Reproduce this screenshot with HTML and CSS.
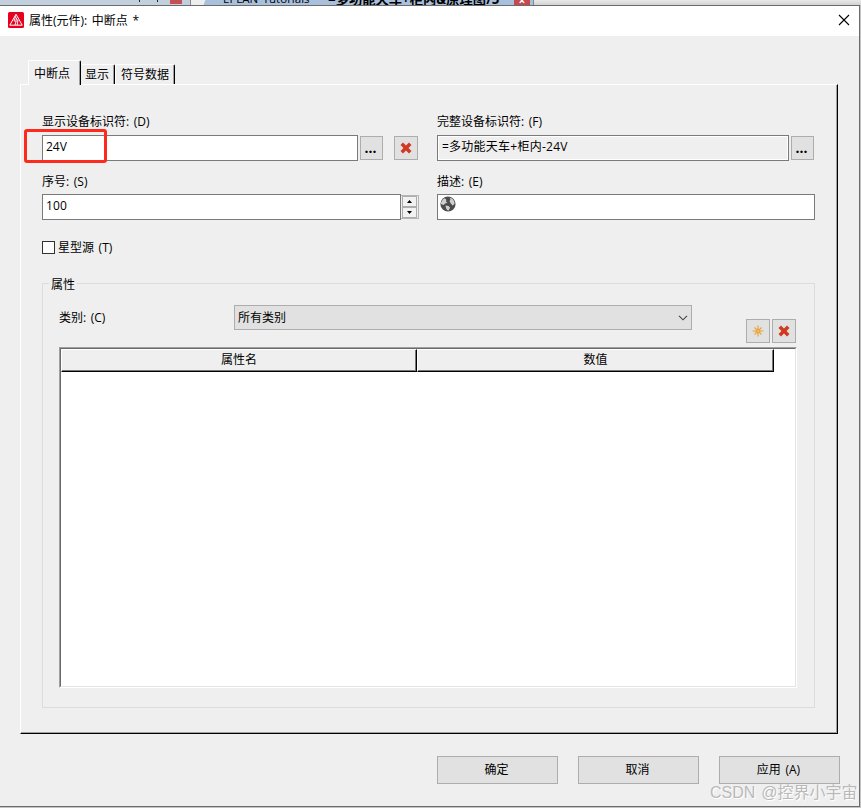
FILE: index.html
```
<!DOCTYPE html>
<html lang="zh-CN">
<head>
<meta charset="utf-8">
<title>属性(元件): 中断点</title>
<link rel="stylesheet" href="styles.css">
</head>
<body>
<div class="desktop">
  <div class="backdrop">
    <div class="back-left"><i class="tick"></i><i class="tick"></i><i class="mini-red"></i></div>
    <div class="back-tabs"><span class="back-tab">EPLAN Tutorials</span><span class="back-tab current">=多功能天车+柜内&amp;原理图/5</span><span class="back-close">×</span></div>
  </div>
  <main class="dialog">
    <header class="titlebar">
      <svg class="logo" width="16" height="16" viewBox="0 0 16 16"><rect width="16" height="16" rx="1.5" fill="#e5001f"/><path d="M8 2.2 14.2 13.2H1.8Z" fill="none" stroke="#fff" stroke-width="1"/><path d="M8 3.5 6 9h2.2L7 13M8.8 5.5 8 8h2l-.8 5" fill="none" stroke="#fff" stroke-width=".9"/></svg>
      <h1 class="title">属性(元件): 中断点 *</h1>
      <svg class="close" width="12" height="12" viewBox="0 0 12 12"><path d="M1 1 11 11M11 1 1 11" stroke="#000" stroke-width="1.1"/></svg>
    </header>
    <nav class="tabs"><span class="tab active">中断点</span><span class="tab second">显示</span><span class="tab third">符号数据</span></nav>
    <section class="panel">
      <div class="form">
        <div class="field">
          <label class="label">显示设备标识符: (D)</label>
          <div class="row"><div class="input device">24V<span class="highlight"></span></div><button class="btn dots">...</button><button class="btn icon del"><svg width="12" height="12" viewBox="0 0 12 12"><path d="M3 .5 6 3.5 9 .5 11.5 3 8.5 6 11.5 9 9 11.5 6 8.5 3 11.5 .5 9 3.5 6 .5 3Z" fill="#cf3a20"/></svg></button></div>
        </div>
        <div class="field">
          <label class="label">完整设备标识符: (F)</label>
          <div class="row"><div class="input full">=多功能天车+柜内-24V</div><button class="btn dots">...</button></div>
        </div>
        <div class="field">
          <label class="label">序号: (S)</label>
          <div class="row"><div class="input serial">100</div><div class="spinner"><span class="spin"><svg width="5" height="3" viewBox="0 0 5 3"><path d="M0 3 2.5 0 5 3Z"/></svg></span><span class="spin"><svg width="5" height="3" viewBox="0 0 5 3"><path d="M0 0H5L2.5 3Z"/></svg></span></div></div>
        </div>
        <div class="field">
          <label class="label">描述: (E)</label>
          <div class="row"><div class="input desc"><svg width="16" height="16" viewBox="0 0 16 16"><circle cx="8" cy="8" r="7.6" fill="#4b4b4b"/><path d="M1 6.5 3 3.3 5 2.2 6.5 4 5.8 5.5 7.5 6.8 5.2 7.5 3.5 9 1 8ZM9.5 1.5 12.5 2.8 14.3 5.5 14.6 8 12.5 9.5 10.5 7 9.5 5 10.5 3.5ZM5.5 9.5 8.5 10 10 11.5 8.8 14.5 7 14 6 12Z" fill="#cfcfcf"/></svg></div></div>
        </div>
      </div>
      <label class="check"><span class="box"></span>星型源 (T)</label>
      <div class="group">
        <h2 class="legend">属性</h2>
        <div class="filter">
          <span class="cat">类别: (C)</span>
          <div class="combo">所有类别<svg width="10" height="6" viewBox="0 0 10 6"><path d="M1 .8 5 4.8 9 .8" fill="none" stroke="#444" stroke-width="1.1"/></svg></div>
          <div class="tools">
            <button class="btn icon"><svg width="12" height="12" viewBox="0 0 12 12"><path d="M6 .5V11.5M.5 6H11.5M2.5 2.5 9.5 9.5M9.5 2.5 2.5 9.5" stroke="#e8a33c" stroke-width="1.1"/><circle cx="6" cy="6" r="2" fill="#f3b65a" stroke="#e8a33c"/></svg></button><button class="btn icon"><svg width="12" height="12" viewBox="0 0 12 12"><path d="M3 .5 6 3.5 9 .5 11.5 3 8.5 6 11.5 9 9 11.5 6 8.5 3 11.5 .5 9 3.5 6 .5 3Z" fill="#cf3a20"/></svg></button>
          </div>
        </div>
        <div class="table"><div class="inner"><div class="head"><span class="th">属性名</span><span class="th">数值</span></div></div></div>
      </div>
    </section>
    <footer class="actions"><button class="btn action">确定</button><button class="btn action">取消</button><button class="btn action">应用 (A)</button></footer>
  </main>
  <div class="watermark">CSDN @控界小宇宙</div>
</div>
</body>
</html>
```
FILE: styles.css
```
* { box-sizing: border-box; }
body { margin: 0; font: 12px/16px "Open Sans", "Noto Sans CJK SC", sans-serif; color: #000; word-spacing: 1.5px; }
h1, h2 { margin: 0; font: inherit; }
svg { display: block; flex: none; }
.desktop { position: relative; width: 861px; height: 808px; overflow: hidden; background: #c4c4c4; }
.backdrop { display: flex; height: 5px; overflow: hidden; background: linear-gradient(#e9e9e9, #d2d2d2); }
.back-left { display: flex; width: 191px; padding-left: 139px; background: #c2cfdd; border-right: 1px solid #888; }
.tick { width: 1px; height: 2px; margin-right: 17px; background: #222; }
.mini-red { width: 12px; height: 4px; margin-left: -5px; background: #c55055; }
.back-tabs { display: flex; width: 343px; padding-left: 32px; background: linear-gradient(110deg, #eee 13px, #a9c0dc 14px); border-right: 1px solid #888; }
.back-tab { width: 105px; margin-top: -8px; line-height: 14px; font-size: 11.5px; white-space: nowrap; }
.back-tab.current { width: 186px; font-size: 13.3px; font-weight: 700; }
.back-close { width: 16px; height: 5px; background: #c44a4e; color: #fff; line-height: 2px; text-align: center; font-weight: 700; }
.dialog { width: 860px; height: 802px; background: #efefef; border: solid #6b6b6b; border-width: 1px 1px 1px 0; }
.titlebar { display: flex; align-items: center; height: 30px; padding: 0 9px 2px 8px; background: #fff; }
.title { flex: 1; margin-left: 5px; padding-top: 1px; }
.close { margin-top: 0; }
.tabs { display: flex; align-items: flex-end; height: 48px; padding-left: 28px; }
.tab { height: 20px; padding-top: 2px; border-top: 1px solid #fff; border-right: 1px solid #000; box-shadow: inset -1px 0 #a0a0a0; white-space: nowrap; }
.active { position: relative; width: 53px; height: 25px; padding: 5px 0 0 5px; margin: 0 1px -1px 0; background: #efefef; border-left: 1px solid #fff; border-radius: 2px 2px 0 0; }
.second { width: 33px; padding-left: 3px; border-radius: 0 2px 0 0; }
.third { width: 60px; padding-left: 5px; border-left: 1px solid #fff; border-radius: 2px 2px 0 0; }
.panel { width: 818px; height: 650px; margin-left: 20px; padding: 28px 20px 0 21px; border: 1px solid; border-color: #fff #000 #000 #fff; box-shadow: inset -1px -1px #a0a0a0; }
.form { display: grid; grid-template-columns: 395px 378px; row-gap: 12px; }
.label { display: block; height: 22px; line-height: 17px; }
.field:nth-child(n+3) .label { height: 21px; }
.row { display: flex; align-items: center; height: 26px; }
.input { height: 26px; padding: 3px; background: #fff; border: 1px solid #7a7a7a; white-space: nowrap; }
.device { position: relative; width: 316px; }
.highlight { position: absolute; left: -19px; top: -7px; width: 83px; height: 34px; border: 3px solid #fd2a1e; border-radius: 3px; }
.full { width: 352px; padding-left: 4px; background: #efefef; box-shadow: inset 0 0 0 1px #fff; letter-spacing: .25px; }
.serial { width: 359px; letter-spacing: .2px; }
.desc { width: 378px; padding: 2px; }
.desc svg { margin-top: -1px; }
.btn { display: flex; align-items: center; justify-content: center; margin: 0; padding: 0; font: inherit; word-spacing: inherit; color: #000; background: #e1e1e1; border: 1px solid #adadad; }
.dots { width: 23px; height: 24px; margin-left: 2px; font-weight: 700; font-size: 14px; padding: 0 2px 1px 0; }
.icon { width: 24px; height: 24px; }
.del { margin-left: 11px; }
.spinner { display: flex; flex-direction: column; width: 18px; height: 24px; border: 1px solid #b4b4bc; border-left: 0; padding: 0 1px; }
.spin { display: flex; flex: 1; align-items: center; justify-content: center; border: 1px solid #adadad; background: #f2f2f2; }
.check { display: flex; align-items: center; height: 17px; margin-top: 19px; }
.box { width: 13px; height: 13px; margin-right: 3px; background: #fff; border: 1px solid #333; }
.group { width: 773px; height: 425px; margin-top: 27px; padding: 0 17px 0 16px; border: 1px solid #dcdcdc; }
.legend { width: 28px; height: 16px; margin: -7px 0 0 -10px; padding-left: 2px; background: #efefef; }
.filter { display: flex; align-items: flex-start; height: 54px; padding-top: 12px; }
.cat { width: 175px; padding-top: 5px; }
.combo { display: flex; align-items: center; justify-content: space-between; width: 458px; height: 25px; padding: 0 3px 0 3px; background: #e1e1e1; border: 1px solid #adadad; }
.tools { display: flex; gap: 2px; margin: 14px 0 0 54px; }
.table { width: 738px; height: 341px; border: 1px solid; border-color: #a0a0a0 #fff #fff #a0a0a0; }
.inner { height: 100%; background: #fff; border: 1px solid; border-color: #696969 #e3e3e3 #e3e3e3 #696969; }
.head { display: grid; grid-template-columns: 356px 357px; width: 713px; height: 23px; }
.th { text-align: center; line-height: 20px; background: #efefef; border: 1px solid; border-color: #fff #000 #000 #fff; box-shadow: inset -1px -1px #777; }
.actions { display: flex; gap: 20px; padding: 22px 0 0 437px; }
.action { width: 121px; height: 28px; padding-right: 2px; }
.watermark { position: absolute; left: 710px; top: 783px; font: 16px/20px "Liberation Sans", "Noto Sans CJK SC", sans-serif; color: #b9b9b9; text-shadow: 1px 1px #fff; white-space: nowrap; }
```
